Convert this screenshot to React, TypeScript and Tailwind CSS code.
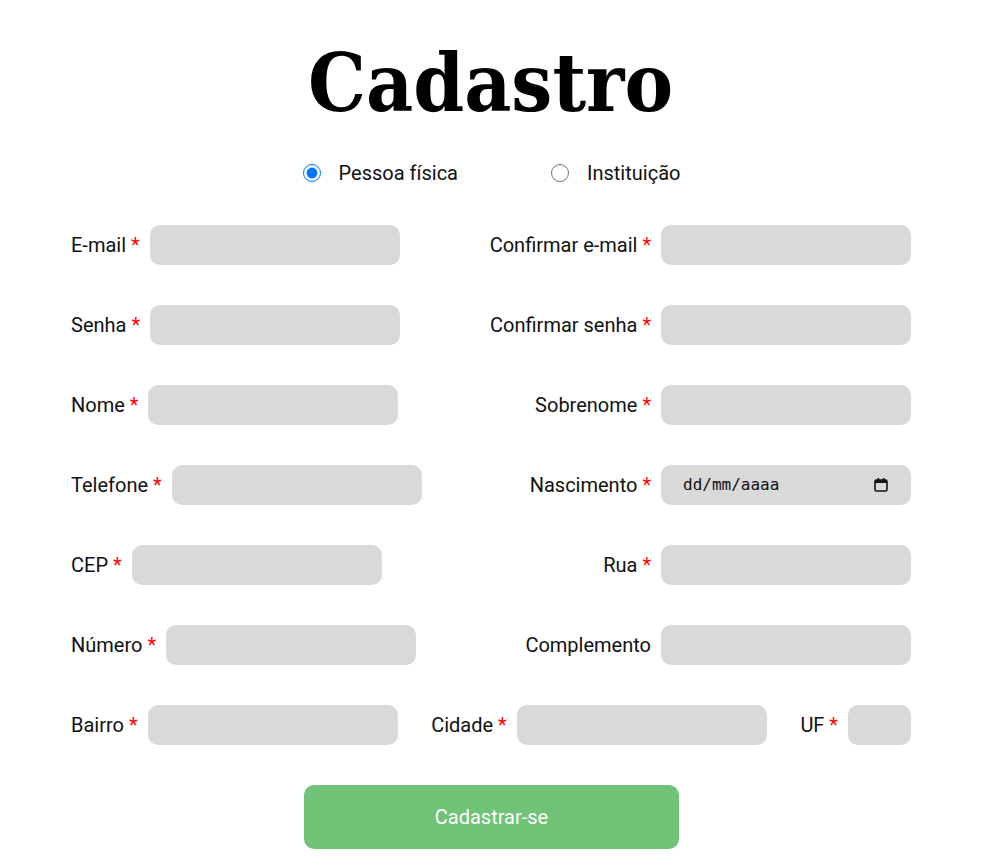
import React from 'react';

type Field = { label: string; required?: boolean };

const ROWS: [Field, Field][] = [
  [{ label: 'E-mail', required: true }, { label: 'Confirmar e-mail', required: true }],
  [{ label: 'Senha', required: true }, { label: 'Confirmar senha', required: true }],
  [{ label: 'Nome', required: true }, { label: 'Sobrenome', required: true }],
];

const Label = ({ label, required }: Field) => (
  <span className="whitespace-nowrap">
    {label}
    {required && <span className="text-[#ff0000]"> *</span>}
  </span>
);

const Input = ({ w = 'w-[250px]' }: { w?: string }) => (
  <input type="text" className={`${w} h-10 rounded-[10px] bg-[#d9d9d9] outline-none px-3`} />
);

const LeftField = ({ label, required }: Field) => (
  <div className="flex items-center gap-[10px]">
    <Label label={label} required={required} />
    <Input />
  </div>
);

const RightField = ({ label, required, children }: Field & { children?: React.ReactNode }) => (
  <div className="flex items-center justify-end gap-[10px]">
    <Label label={label} required={required} />
    {children ?? <Input />}
  </div>
);

const DateInput = () => (
  <div className="w-[250px] h-10 rounded-[10px] bg-[#d9d9d9] flex items-center justify-between pl-[22px] pr-[22px]">
    <span className="text-[16px] text-[#111]" style={{ fontFamily: '"DejaVu Sans Mono", monospace' }}>
      dd/mm/aaaa
    </span>
    <svg width="16" height="16" viewBox="0 0 16 16" fill="none">
      <rect x="2" y="3" width="12" height="11" rx="1.5" stroke="#111" strokeWidth="1.6" />
      <rect x="2" y="3" width="12" height="3" fill="#111" />
      <rect x="4.5" y="1" width="1.6" height="3" fill="#111" />
      <rect x="9.9" y="1" width="1.6" height="3" fill="#111" />
    </svg>
  </div>
);

export default function App() {
  return (
    <div
      className="w-[987px] min-h-[866px] bg-white text-[#111] text-[20px]"
      style={{ fontFamily: 'Roboto, "Liberation Sans", sans-serif' }}
    >
      {/* Title */}
      <h1
        className="text-center text-black text-[81px] leading-none font-bold pt-[42px] mr-[6px]"
        style={{ fontFamily: '"DejaVu Serif Condensed", "DejaVu Serif", serif' }}
      >
        Cadastro
      </h1>

      {/* Tipo */}
      <div className="flex justify-center items-center gap-[93px] mt-[35px] pr-[4px]">
        <label className="flex items-center gap-[18px]">
          <input type="radio" name="tipo" defaultChecked className="w-[18px] h-[18px] m-0 accent-[#0075ff]" />
          Pessoa física
        </label>
        <label className="flex items-center gap-[18px]">
          <input type="radio" name="tipo" className="w-[18px] h-[18px] m-0" />
          Instituição
        </label>
      </div>

      {/* Form */}
      <div className="w-[840px] ml-[71px] mt-[37px] flex flex-col gap-10">
        {ROWS.map(([l, r], i) => (
          <div key={i} className="grid grid-cols-2">
            <LeftField {...l} />
            <RightField {...r} />
          </div>
        ))}
        <div className="grid grid-cols-2">
          <LeftField label="Telefone" required />
          <RightField label="Nascimento" required>
            <DateInput />
          </RightField>
        </div>
        <div className="grid grid-cols-2">
          <LeftField label="CEP" required />
          <RightField label="Rua" required />
        </div>
        <div className="grid grid-cols-2">
          <LeftField label="Número" required />
          <RightField label="Complemento" />
        </div>
        <div className="flex items-center justify-between">
          <LeftField label="Bairro" required />
          <div className="flex items-center gap-[10px]">
            <Label label="Cidade" required />
            <Input />
          </div>
          <div className="flex items-center gap-[10px]">
            <Label label="UF" required />
            <Input w="w-[63px]" />
          </div>
        </div>
      </div>

      {/* Submit */}
      <div className="flex justify-center mt-10 pr-[4px]">
        <button className="w-[375px] h-16 rounded-[10px] bg-[#6fc276] text-white text-[20px]">
          Cadastrar-se
        </button>
      </div>
    </div>
  );
}
